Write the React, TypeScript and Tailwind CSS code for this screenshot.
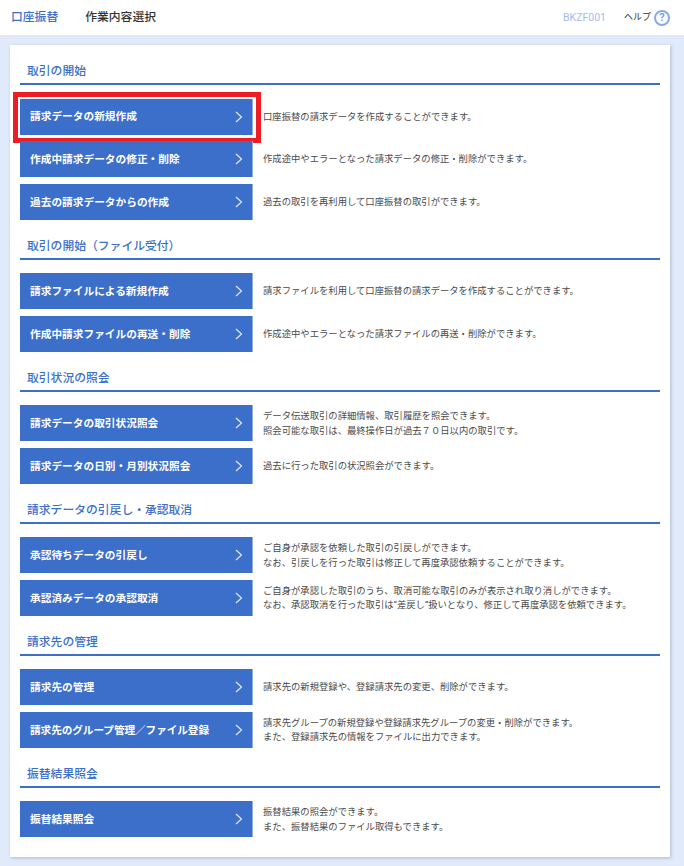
const FONT = "font-['Roboto','Noto_Sans_CJK_JP',sans-serif]";

type Row = { label: string; desc: string[]; selected?: boolean; tight?: boolean };
type Section = { title: string; rows: Row[] };

const sections: Section[] = [
  {
    title: "取引の開始",
    rows: [
      { label: "請求データの新規作成", desc: ["口座振替の請求データを作成することができます。"], selected: true },
      { label: "作成中請求データの修正・削除", desc: ["作成途中やエラーとなった請求データの修正・削除ができます。"] },
      { label: "過去の請求データからの作成", desc: ["過去の取引を再利用して口座振替の取引ができます。"] },
    ],
  },
  {
    title: "取引の開始（ファイル受付）",
    rows: [
      { label: "請求ファイルによる新規作成", desc: ["請求ファイルを利用して口座振替の請求データを作成することができます。"] },
      { label: "作成中請求ファイルの再送・削除", desc: ["作成途中やエラーとなった請求ファイルの再送・削除ができます。"] },
    ],
  },
  {
    title: "取引状況の照会",
    rows: [
      { label: "請求データの取引状況照会", desc: ["データ伝送取引の詳細情報、取引履歴を照会できます。", "照会可能な取引は、最終操作日が過去７０日以内の取引です。"] },
      { label: "請求データの日別・月別状況照会", desc: ["過去に行った取引の状況照会ができます。"] },
    ],
  },
  {
    title: "請求データの引戻し・承認取消",
    rows: [
      { label: "承認待ちデータの引戻し", desc: ["ご自身が承認を依頼した取引の引戻しができます。", "なお、引戻しを行った取引は修正して再度承認依頼することができます。"] },
      { label: "承認済みデータの承認取消", desc: ["ご自身が承認した取引のうち、取消可能な取引のみが表示され取り消しができます。", "なお、承認取消を行った取引は“差戻し”扱いとなり、修正して再度承認を依頼できます。"] },
    ],
  },
  {
    title: "請求先の管理",
    rows: [
      { label: "請求先の管理", desc: ["請求先の新規登録や、登録請求先の変更、削除ができます。"] },
      { label: "請求先のグループ管理／ファイル登録", tight: true, desc: ["請求先グループの新規登録や登録請求先グループの変更・削除ができます。", "また、登録請求先の情報をファイルに出力できます。"] },
    ],
  },
  {
    title: "振替結果照会",
    rows: [{ label: "振替結果照会", desc: ["振替結果の照会ができます。", "また、振替結果のファイル取得もできます。"] }],
  },
];

function Chevron() {
  return (
    <svg width="8" height="12" viewBox="0 0 8 12" fill="none" className="shrink-0">
      <path d="M1 1l5.5 5L1 11" stroke="#dfe8f8" strokeWidth="1.2" />
    </svg>
  );
}

function MenuRow({ row }: { row: Row }) {
  return (
    <div className="relative flex items-center h-[36px]">
      <div className="flex items-center justify-between w-[233px] h-full pl-[10px] pr-[9px] bg-[#3b6fca] border-r border-[#8fb0e6] text-white text-[10.7px] font-bold">
        <span className={row.tight ? "whitespace-nowrap pt-[1px] tracking-[-0.12px]" : "whitespace-nowrap pt-[1px]"}>{row.label}</span>
        <Chevron />
      </div>
      <div className="ml-[10px] pt-[0.5px] text-[9.33px] leading-[14.5px] text-[#4a4a4a] whitespace-nowrap">
        {row.desc.map((d) => (
          <p key={d}>{d}</p>
        ))}
      </div>
      {row.selected && (
        <div className="absolute left-[-7px] top-[-7px] w-[248px] h-[51px] border-[5px] border-[#ee1c25]" />
      )}
    </div>
  );
}

export default function App() {
  return (
    <div className={`${FONT} w-[684px] h-[866px] overflow-hidden bg-[#e0eafb]`}>
      <header className="flex items-center justify-between h-[35px] bg-white pl-[11px] pr-[14px]">
        <div className="flex items-center gap-[27px] text-[11.8px] font-medium">
          <span className="text-[#3b6fca]">口座振替</span>
          <span className="text-[#333]">作業内容選択</span>
        </div>
        <div className="flex items-center">
          <span className="text-[10.5px] text-[#a6bcec] mr-[18px]">BKZF001</span>
          <span className="text-[9px] leading-[12px] pb-[1px] text-[#333] mr-[3px]">ヘルプ</span>
          <span className="flex items-center justify-center w-[16px] h-[16px] rounded-full border-2 border-[#8aa9e8] text-[11px] font-bold leading-none text-[#7da0e4]">?</span>
        </div>
      </header>
      <main className="ml-[10px] mt-[10px] w-[660px] h-[812px] bg-white shadow-[1px_1px_3px_rgba(80,100,140,0.35)] px-[10px] pt-[18px]">
        {sections.map((s) => (
          <section key={s.title} className="mb-[17.55px]">
            <h2 className="h-[22px] pl-[7px] border-b-2 border-[#3b6fca] text-[11.8px] font-medium leading-[17px] text-[#3b6fca]">{s.title}</h2>
            <div className="mt-[13.7px] flex flex-col gap-[6.75px]">
              {s.rows.map((r) => (
                <MenuRow key={r.label} row={r} />
              ))}
            </div>
          </section>
        ))}
      </main>
    </div>
  );
}
